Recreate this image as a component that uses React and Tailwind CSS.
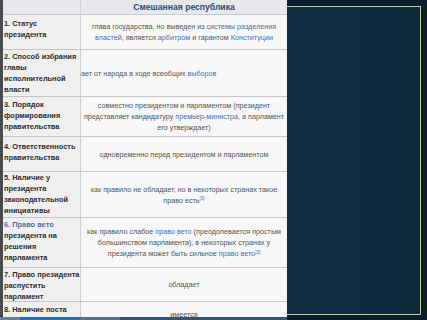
const link = 'text-[#4d6fa8]'

const rows = [
  {
    h: 'h-[35px]', pt: 'pt-[3px]',
    label: <>1. Статус<br />президента</>,
    body: (
      <>глава государства, но выведен из <a className={link}>системы разделения</a><br />
        <a className={link}>властей</a>, является <a className={link}>арбитром</a> и гарантом <a className={link}>Конституции</a></>
    ),
  },
  {
    h: 'h-[47px]', pt: 'pt-[1px]', left: true,
    label: <>2. Способ избрания<br />главы<br />исполнительной<br />власти</>,
    body: <>ает от народа в ходе всеобщих <a className={link}>выборов</a></>,
  },
  {
    h: 'h-[40px]', pt: 'pt-[2px]',
    label: <>3. Порядок<br />формирования<br />правительства</>,
    body: (
      <>совместно президентом и парламентом (президент<br />
        представляет кандидатуру <a className={link}>премьер-министра</a>, а парламент<br />
        его утверждает)</>
    ),
  },
  {
    h: 'h-[35px]', pt: 'pt-[4px]',
    label: <>4. Ответственность<br />правительства</>,
    body: <>одновременно перед президентом и парламентом</>,
  },
  {
    h: 'h-[46px]', pt: 'pt-[0px]',
    label: <>5. Наличие у<br />президента<br />законодательной<br />инициативы</>,
    body: (
      <>как правило не обладает, но в некоторых странах такое<br />
        право есть<sup className="text-[4.5px] text-[#4d6fa8]">[3]</sup></>
    ),
  },
  {
    h: 'h-[50px]', pt: 'pt-[1px]',
    label: <><a className={link}>6. Право вето</a><br />президента на<br />решения<br />парламента</>,
    body: (
      <>как правило слабое <a className={link}>право вето</a> (преодолевается простым<br />
        большинством парламента), в некоторых странах у<br />
        президента может быть сильное <a className={link}>право вето</a><sup className="text-[4.5px] text-[#4d6fa8]">[3]</sup></>
    ),
  },
  {
    h: 'h-[34px]', pt: 'pt-[1px]',
    label: <>7. Право президента<br />распустить<br />парламент</>,
    body: <>обладает</>,
  },
  {
    h: 'h-[30px]', pt: 'pt-[2px]', low: true,
    label: <>8. Наличие поста</>,
    body: <>имеется</>,
  },
]

export default function App() {
  return (
    <div className="relative w-[427px] h-[320px] overflow-hidden bg-[#0a1f2d] font-['Liberation_Sans',Arial,sans-serif]">
      {/* slide frame behind the table */}
      <div className="absolute left-[150px] top-[6px] w-[271px] h-[309px] border-[1.5px] border-[#c3cb86] bg-gradient-to-r from-[#0d2a3d] via-[#0f2d42] to-[#0d293c]" />

      {/* table screenshot */}
      <div className="relative w-[287px] border-l-[3px] border-[#474b50] bg-[#f3f3f3] text-[7.4px] leading-[11px]">
        <div className="grid grid-cols-[77px_1px_206px] grid-rows-[minmax(0,1fr)] h-[15px] bg-[#e6e8eb] border-b border-[#c9cbce]">
          <div />
          <div className="bg-[#cfd1d4]" />
          <div className="flex items-center justify-center text-[8.6px] font-bold text-[#2f4d70]">Смешанная республика</div>
        </div>
        {rows.map((r, i) => (
          <div key={i} className={`grid grid-cols-[77px_1px_206px] grid-rows-[minmax(0,1fr)] border-b border-[#c6c6c6] ${r.h}`}>
            <div className={`overflow-hidden whitespace-nowrap bg-[#efefef] pl-[1px] font-bold text-[#2e2e2e] ${r.pt}`}>{r.label}</div>
            <div className="bg-[#d0d0d0]" />
            <div className={`flex overflow-hidden whitespace-nowrap bg-[#f7f7f7] text-[7.2px] text-[#555] ${r.left ? 'items-center justify-start' : r.low ? 'items-start justify-center pt-[7px]' : 'items-center justify-center text-center'}`}>
              <div>{r.body}</div>
            </div>
          </div>
        ))}
      </div>

      {/* bottom strip */}
      <div className="absolute left-0 bottom-0 w-[287px] h-[3px] bg-[#36546f] flex">
        <div className="w-[20px] bg-[#6b7f90]" />
        <div className="w-[60px] bg-[#2f6aa0]" />
        <div className="w-[40px] bg-[#5a7188]" />
      </div>
    </div>
  )
}
